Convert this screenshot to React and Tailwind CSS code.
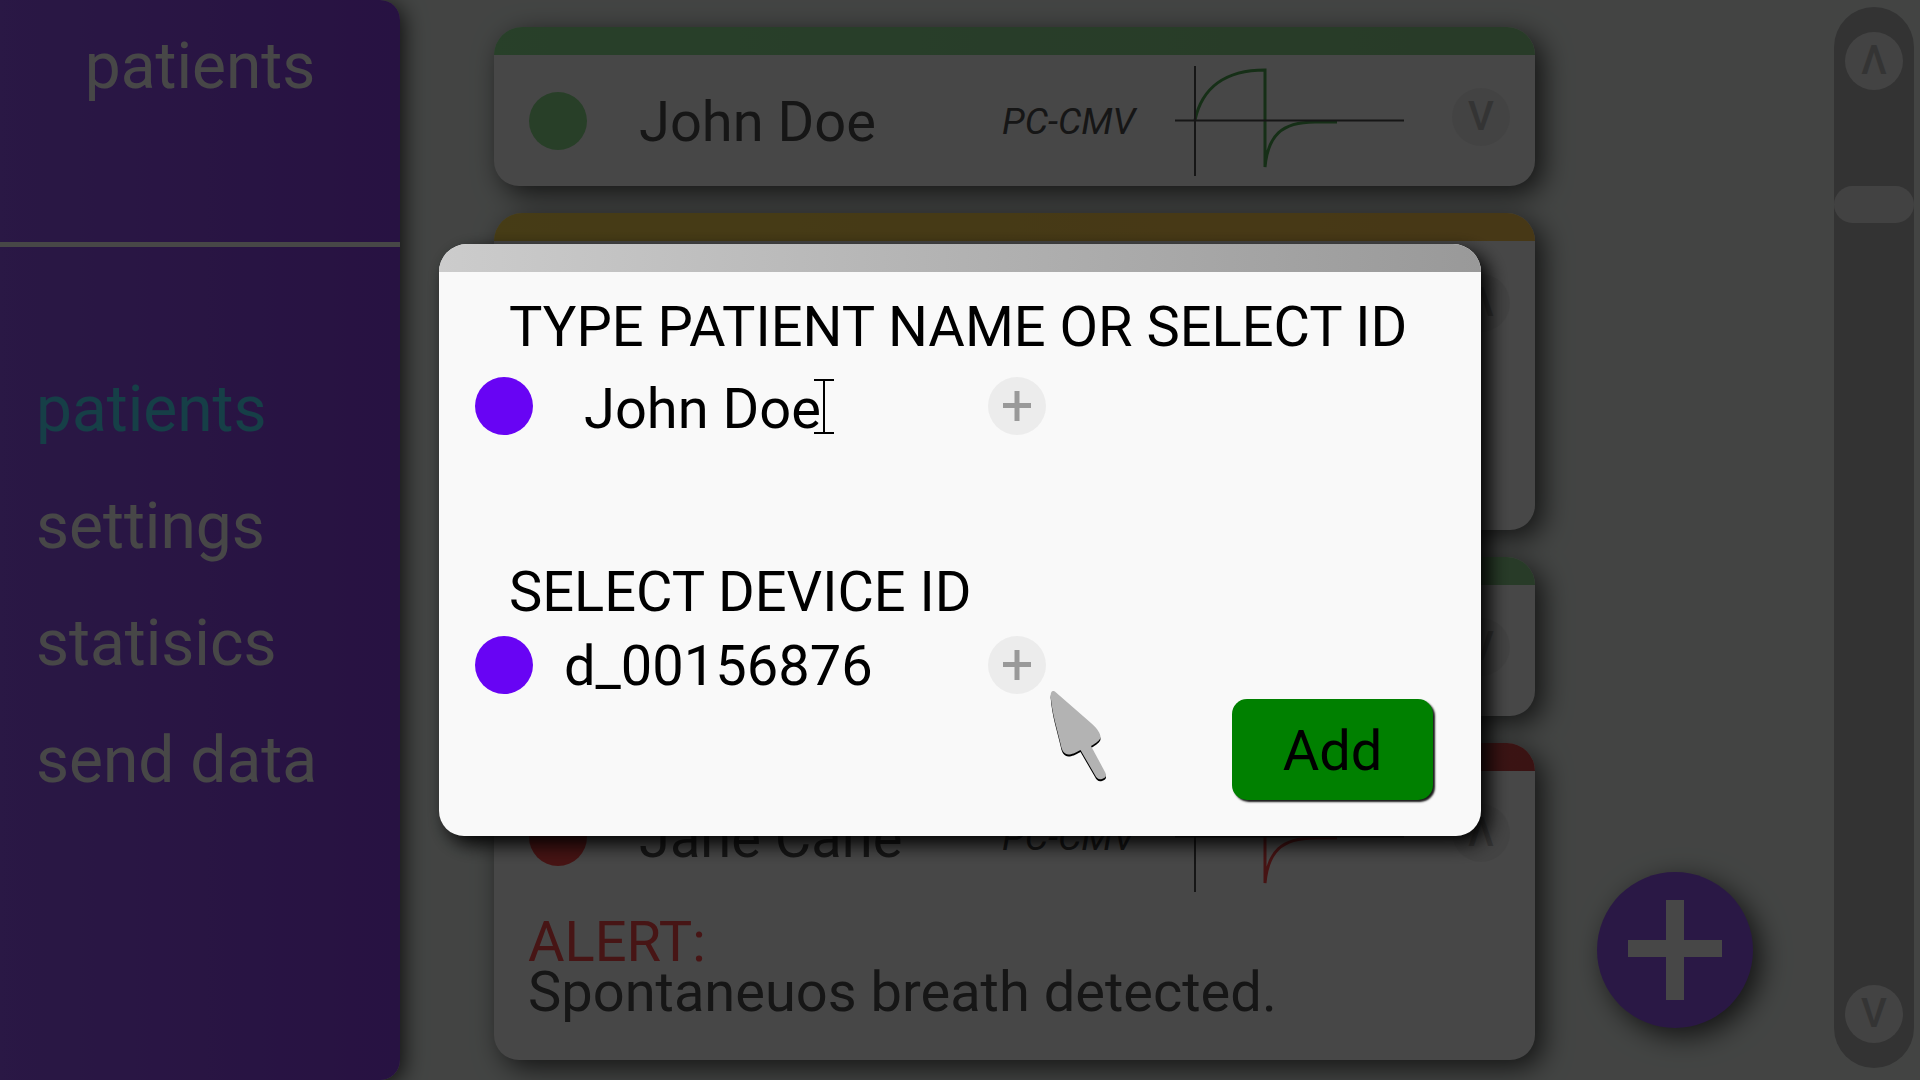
const navItems = ["patients", "settings", "statisics", "send data"];

const tones = {
  green: {
    bar: "bg-linear-to-r from-[#8fe495] to-[#8fd38f]",
    dot: "bg-[#8fe18f]",
    curve: "#4fa852",
  },
  yellow: {
    bar: "bg-linear-to-r from-[#f9d64f] to-[#ffc850]",
    dot: "bg-[#ffd64b]",
    curve: "#c9952b",
  },
  red: {
    bar: "bg-linear-to-r from-[#dc4b4b] to-[#cf4747]",
    dot: "bg-[#fa4747]",
    curve: "#fa4747",
  },
};

const patients = [
  { tone: "green", name: "John Doe", mode: "PC-CMV", open: false },
  { tone: "yellow", name: "", mode: "", open: true },
  { tone: "green", name: "", mode: "", open: false },
  {
    tone: "red",
    name: "Jane Cane",
    mode: "PC-CMV",
    open: true,
    alert: "Spontaneuos breath detected.",
  },
];

function Sidebar() {
  return (
    <aside className="w-[400px] shrink-0 rounded-r-[20px] bg-linear-to-r from-[#9656f6] to-[#8e40ec] text-[64px] leading-[64px] text-white shadow-[4px_4px_22px_rgba(0,0,0,0.75)]">
      <div className="h-[247px] border-b-5 border-white pt-[35px] text-center">
        <h1>patients</h1>
      </div>
      <nav className="flex flex-col gap-[53px] pt-[131px] pl-9">
        {navItems.map((item, i) => (
          <a key={item} href="#" className={i === 0 ? "text-[#4fe1ff]" : "text-white"}>
            {item}
          </a>
        ))}
      </nav>
    </aside>
  );
}

function Waveform({ color }) {
  return (
    <svg className="w-[229px] shrink-0" viewBox="0 0 229 110" fill="none" aria-hidden="true">
      <path
        d="M20 54C27 22 50 4 90 4V101C93 70 106 56 140 56H162"
        stroke={color}
        strokeWidth="3"
      />
      <path d="M20 0V110M0 54.5H229" stroke="#4f4f4f" strokeWidth="2" />
    </svg>
  );
}

function RoundButton({ up, label, className }) {
  return (
    <button
      type="button"
      aria-label={label}
      className={`flex size-[58px] shrink-0 items-center justify-center rounded-full bg-[#f0f0f0] text-[40px] leading-none font-medium text-[#bababa] ${className}`}
    >
      {up ? "Λ" : "V"}
    </button>
  );
}

function PatientCard({ patient }) {
  const tone = tones[patient.tone];
  return (
    <article
      className={`rounded-t-[28px] rounded-b-[25px] bg-[#fdfdfd] text-[56px] text-[#4f4f4f] shadow-[8px_8px_28px_rgba(0,0,0,0.7)] ${
        patient.open ? "min-h-[317px]" : ""
      }`}
    >
      <div className={`h-7 rounded-t-[28px] ${tone.bar}`} />
      <div className="flex h-[131px] items-center pr-[25px] pl-[35px]">
        <span className={`size-[58px] shrink-0 rounded-full ${tone.dot}`} />
        <h2 className="flex-1 pt-0.5 pl-[52px] leading-[64px]">{patient.name}</h2>
        <span className="w-[173px] pt-0.5 text-[37px] leading-10 italic">{patient.mode}</span>
        <Waveform color={tone.curve} />
        <RoundButton
          up={patient.open}
          label={patient.open ? "Collapse" : "Expand"}
          className="mb-2 ml-12"
        />
      </div>
      {patient.alert && (
        <div className="px-[34px] pt-[15px] pb-[43px] leading-[50px]">
          <p className="text-[#ff4b4b]">ALERT:</p>
          <p>{patient.alert}</p>
        </div>
      )}
    </article>
  );
}

function ScrollRail() {
  return (
    <div className="mt-[7px] mr-[6px] mb-3 flex w-20 shrink-0 flex-col items-center rounded-full bg-[#b6b6b6] py-[25px]">
      <RoundButton up label="Scroll up" className="" />
      <div className="mt-24 h-[37px] w-full rounded-full bg-[#ececec]" />
      <RoundButton label="Scroll down" className="mt-auto" />
    </div>
  );
}

function AddButton({ label }) {
  return (
    <button
      type="button"
      aria-label={label}
      className="flex size-[58px] items-center justify-center rounded-full bg-[#ececec]"
    >
      <svg width="28" height="30" viewBox="0 0 28 30" aria-hidden="true">
        <path d="M14 0V30M0 14.5H28" stroke="#999999" strokeWidth="5" />
      </svg>
    </button>
  );
}

function Pointer() {
  return (
    <svg
      className="pointer-events-none absolute top-[54px] left-[62px]"
      width="58"
      height="94"
      viewBox="0 0 58 94"
      aria-hidden="true"
    >
      <defs>
        <path
          id="pointer"
          d="M.7 6C.5 1.500 2.500-.5 6 2.500L41 33C48 39 50.500 44 50.500 47C50.500 50 46 53 41 56L55 82C57 86 56 88 52 89C48.500 90 46.500 88 45 85L30.500 60C25 63 22 64.500 18.500 64.500C14.500 64.500 12 61 10.800 55C7 38 2 24 .7 6Z"
        />
      </defs>
      <use href="#pointer" y="2" fill="#000000" />
      <use href="#pointer" fill="#b3b3b3" />
    </svg>
  );
}

function AddPatientDialog() {
  return (
    <form
      role="dialog"
      aria-label="Add patient"
      className="flex w-full max-w-[1042px] flex-col rounded-t-[28px] rounded-b-[25px] bg-[#f9f9f9] text-[56px] leading-[64px] text-black shadow-[8px_8px_20px_rgba(0,0,0,1)]"
    >
      <div className="h-7 rounded-t-[28px] bg-linear-to-r from-[#cccccc] to-[#999999]" />
      <label htmlFor="patient" className="mt-[23px] pl-[70px] whitespace-nowrap">
        TYPE PATIENT NAME OR SELECT ID
      </label>
      <div className="mt-[18px] flex items-center pl-9">
        <span className="size-[58px] shrink-0 rounded-full bg-[#6804f4]" />
        <div className="relative h-[58px] w-[455px]">
          <input
            id="patient"
            defaultValue="John Doe"
            className="h-full w-full bg-transparent pt-0.5 pl-[51px] outline-none"
          />
          <svg
            className="pointer-events-none absolute top-0.5 left-[281px]"
            width="20"
            height="55"
            viewBox="0 0 20 55"
            aria-hidden="true"
          >
            <path d="M0 1H20M0 54H20M10 1V54" stroke="#000000" strokeWidth="2" />
          </svg>
        </div>
        <AddButton label="Select patient" />
      </div>
      <label htmlFor="device" className="mt-[125px] pl-[70px]">
        SELECT DEVICE ID
      </label>
      <div className="mt-3 flex items-center pl-9">
        <span className="size-[58px] shrink-0 rounded-full bg-[#6804f4]" />
        <input
          id="device"
          defaultValue="d_00156876"
          className="h-[58px] w-[455px] bg-transparent pt-0.5 pl-[31px] outline-none"
        />
        <div className="relative">
          <AddButton label="Select device" />
          <Pointer />
        </div>
      </div>
      <button
        type="button"
        className="mt-[5px] mr-12 mb-9 h-[101px] w-[201px] self-end rounded-[15px] bg-[#008000] pt-0.5 shadow-[2px_2px_2px_rgba(0,0,0,0.9)]"
      >
        Add
      </button>
    </form>
  );
}

export default function App() {
  return (
    <div className="font-[Roboto,sans-serif]">
      <div className="flex min-h-screen bg-[#eff5f1]">
        <Sidebar />
        <main className="ml-[94px] flex flex-1 flex-col gap-[27px] pt-[27px] pb-5">
          {patients.map((patient, i) => (
            <PatientCard key={i} patient={patient} />
          ))}
        </main>
        <button
          type="button"
          aria-label="Add patient"
          className="mr-[81px] mb-[52px] ml-[62px] flex size-[156px] shrink-0 items-center justify-center self-end rounded-full bg-[#9656f6] shadow-[8px_8px_28px_rgba(0,0,0,0.7)]"
        >
          <svg width="94" height="100" viewBox="0 0 94 100" aria-hidden="true">
            <path d="M38 0H56V40H94V57H56V100H38V57H0V40H38Z" fill="#fdfdfd" />
          </svg>
        </button>
        <ScrollRail />
      </div>
      <div className="fixed inset-0 flex items-center justify-center bg-black/72">
        <AddPatientDialog />
      </div>
    </div>
  );
}
